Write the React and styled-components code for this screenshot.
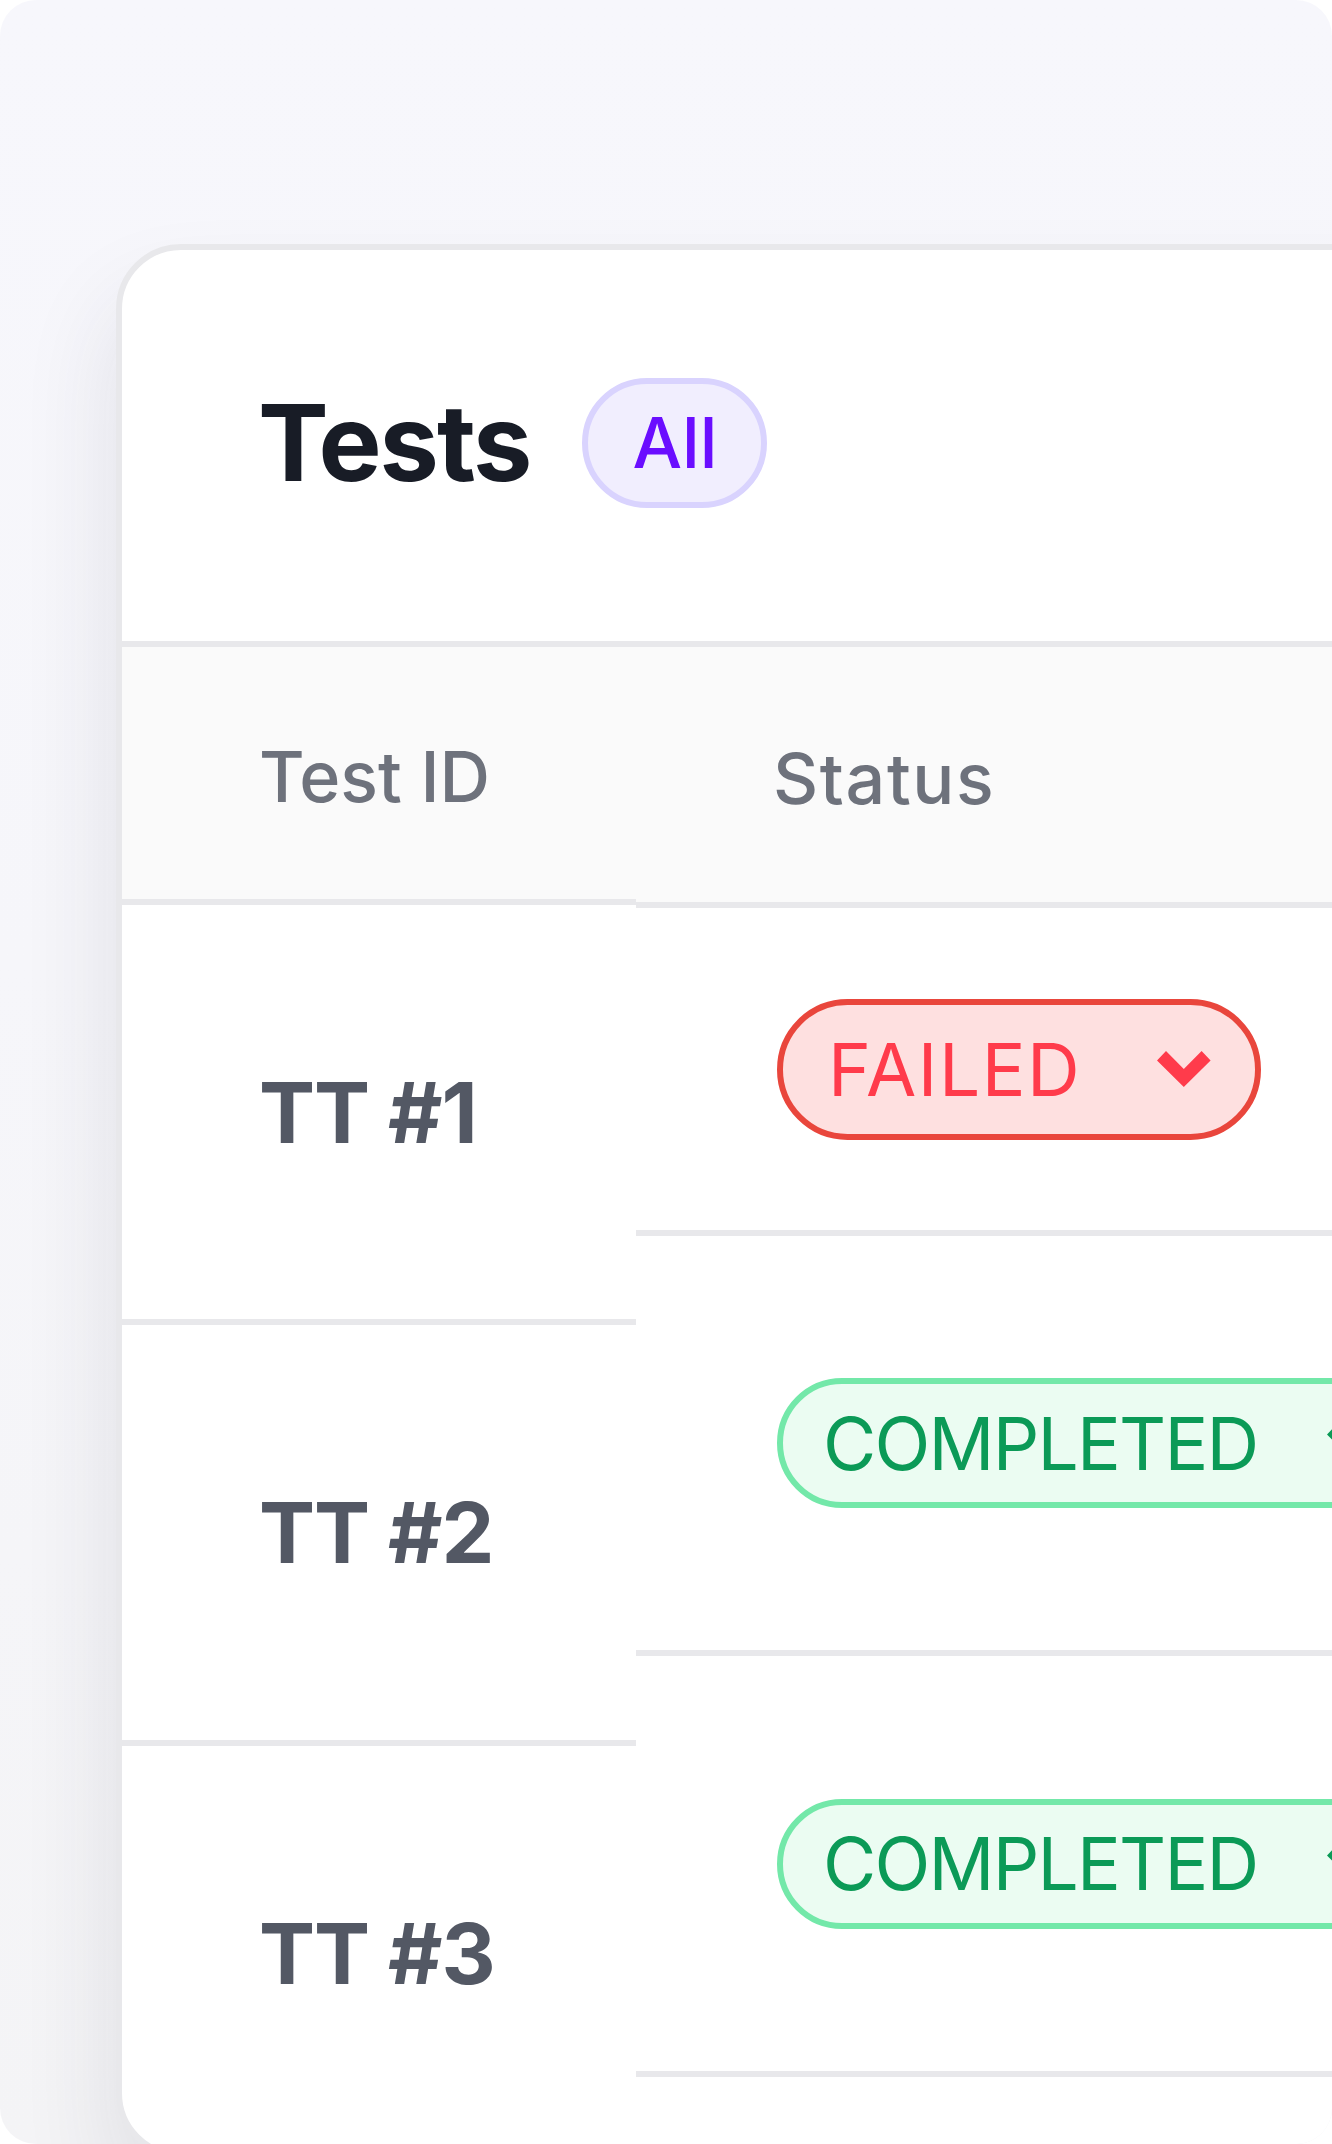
import styled, { createGlobalStyle } from "styled-components";

const GlobalStyle = createGlobalStyle`
  html, body {
    margin: 0;
    padding: 0;
    background: #ffffff;
  }
  body {
    font-family: Inter, "Noto Sans", "Liberation Sans", sans-serif;
  }
`;

const tests = [
  { id: "TT #1", status: "failed", idHeight: 414, statusHeight: 322 },
  { id: "TT #2", status: "completed", idHeight: 415, statusHeight: 414 },
  { id: "TT #3", status: "completed", idHeight: 415, statusHeight: 415 },
];

const tones = {
  failed: {
    label: "FAILED",
    border: "#e9463c",
    bg: "#fee0e0",
    color: "#ff3b4b",
    height: 141,
    padLeft: 45,
    spacing: 1.5,
    gap: 76,
  },
  completed: {
    label: "COMPLETED",
    border: "#73e8a9",
    bg: "#ebfcf2",
    color: "#0b9a57",
    height: 130,
    padLeft: 40,
    spacing: -1.8,
    gap: 70,
  },
};

function Chevron({ color, gap }) {
  return (
    <ChevronIcon viewBox="0 0 54 36" width="54" height="36" $gap={gap}>
      <polygon
        points="0,9.5 9,0 26.8,18 44.6,0 53.6,9.5 26.8,36"
        fill={color}
      />
    </ChevronIcon>
  );
}

function StatusBadge({ status }) {
  const tone = tones[status];
  return (
    <Badge $tone={tone}>
      <span>{tone.label}</span>
      <Chevron color={tone.color} gap={tone.gap} />
    </Badge>
  );
}

function App() {
  return (
    <>
      <GlobalStyle />
      <Backdrop>
        <Card>
          <CardHeader>
            <Title>Tests</Title>
            <FilterPill>All</FilterPill>
          </CardHeader>
          <Table>
            <IdColumn>
              <HeadCell $height={252}>Test ID</HeadCell>
              {tests.map((t) => (
                <IdCell key={t.id} $height={t.idHeight}>
                  {t.id}
                </IdCell>
              ))}
            </IdColumn>
            <StatusColumn>
              <HeadCell $height={255} $spacing={1.6}>
                Status
              </HeadCell>
              {tests.map((t) => (
                <StatusCell key={t.id} $height={t.statusHeight}>
                  <StatusBadge status={t.status} />
                </StatusCell>
              ))}
            </StatusColumn>
          </Table>
        </Card>
      </Backdrop>
    </>
  );
}

export default App;

const Backdrop = styled.div`
  width: 1332px;
  height: 2144px;
  box-sizing: border-box;
  padding: 244px 0 0 116px;
  border-radius: 36px;
  overflow: hidden;
  background: linear-gradient(180deg, #f7f7fc 0%, #f6f6fa 45%, #f4f4f6 100%);
`;

const Card = styled.div`
  width: 1400px;
  height: 1914px;
  box-sizing: border-box;
  background: #ffffff;
  border: 6px solid #e8e8eb;
  border-radius: 65px;
  box-shadow: -10px 50px 90px rgba(40, 40, 70, 0.09);
  overflow: hidden;
  display: flex;
  flex-direction: column;
`;

const CardHeader = styled.div`
  height: 397px;
  box-sizing: border-box;
  padding: 0 0 6px 136px;
  flex-shrink: 0;
  display: flex;
  align-items: center;
  gap: 52px;
  border-bottom: 6px solid #e8e8eb;
`;

const Title = styled.h1`
  margin: 0;
  font-size: 106px;
  font-weight: 700;
  letter-spacing: -2px;
  color: #181c26;
  line-height: 1;
`;

const FilterPill = styled.span`
  display: inline-flex;
  align-items: center;
  justify-content: center;
  box-sizing: border-box;
  height: 130px;
  padding: 0 44px;
  border: 6px solid #d9d3fe;
  border-radius: 999px;
  background: #f1eefe;
  color: #6a0dff;
  font-size: 70px;
  font-weight: 500;
  line-height: 1;
`;

const Table = styled.div`
  display: flex;
  align-items: flex-start;
  flex: 1;
`;

const IdColumn = styled.div`
  width: 514px;
  flex-shrink: 0;
  display: flex;
  flex-direction: column;
`;

const StatusColumn = styled.div`
  flex: 1;
  display: flex;
  flex-direction: column;
`;

const HeadCell = styled.div`
  height: ${(p) => p.$height + 6}px;
  box-sizing: border-box;
  display: flex;
  align-items: center;
  padding: 8px 0 0 137px;
  background: #fafafa;
  border-bottom: 6px solid #e8e8eb;
  color: #6e727c;
  font-size: 70px;
  font-weight: 500;
  line-height: 1;
  letter-spacing: ${(p) => p.$spacing || 0}px;
`;

const IdCell = styled.div`
  height: ${(p) => p.$height}px;
  display: flex;
  align-items: center;
  padding-left: 137px;
  border-bottom: 6px solid #e8e8eb;
  color: #535864;
  font-size: 84px;
  font-weight: 700;
  letter-spacing: -1px;
`;

const StatusCell = styled.div`
  height: ${(p) => p.$height}px;
  display: flex;
  align-items: center;
  padding-left: 141px;
  border-bottom: 6px solid #e8e8eb;
`;

const Badge = styled.div`
  display: inline-flex;
  align-items: center;
  box-sizing: border-box;
  height: ${(p) => p.$tone.height}px;
  padding: 0 44px 0 ${(p) => p.$tone.padLeft}px;
  border: 6px solid ${(p) => p.$tone.border};
  border-radius: 999px;
  background: ${(p) => p.$tone.bg};
  color: ${(p) => p.$tone.color};
  font-size: 73px;
  font-weight: 400;
  letter-spacing: ${(p) => p.$tone.spacing}px;
  line-height: 1;
  white-space: nowrap;
`;

const ChevronIcon = styled.svg`
  display: block;
  flex-shrink: 0;
  margin-left: ${(p) => p.$gap}px;
`;
